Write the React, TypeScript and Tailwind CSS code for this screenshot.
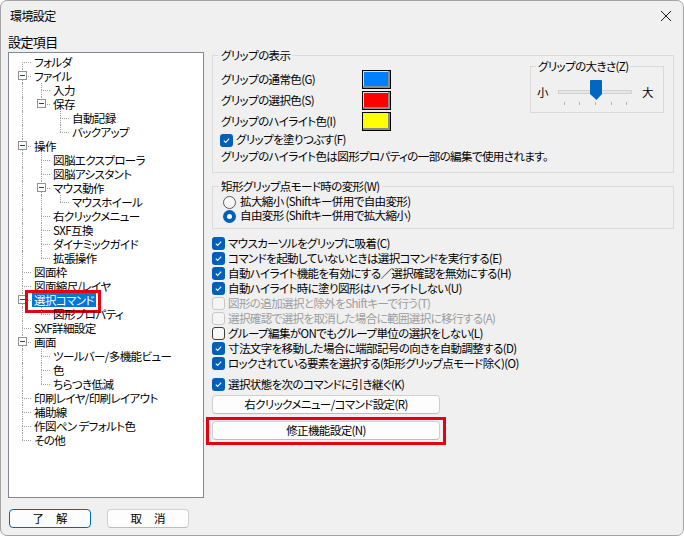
import React from "react";

type Node = [number, string, boolean?];

const TREE: Node[] = [
  [0, "フォルダ"],
  [0, "ファイル", true],
  [1, "入力"],
  [1, "保存", true],
  [2, "自動記録"],
  [2, "バックアップ"],
  [0, "操作", true],
  [1, "図脳エクスプローラ"],
  [1, "図脳アシスタント"],
  [1, "マウス動作", true],
  [2, "マウスホイール"],
  [1, "右クリックメニュー"],
  [1, "SXF互換"],
  [1, "ダイナミックガイド"],
  [1, "拡張操作"],
  [0, "図面枠"],
  [0, "図面縮尺/レイヤ"],
  [0, "選択コマンド", true],
  [1, "図形プロパティ"],
  [0, "SXF詳細設定"],
  [0, "画面", true],
  [1, "ツールバー/多機能ビュー"],
  [1, "色"],
  [1, "ちらつき低減"],
  [0, "印刷レイヤ/印刷レイアウト"],
  [0, "補助線"],
  [0, "作図ペン デフォルト色"],
  [0, "その他"],
];

const SELECTED = 17;

const LINE_X = ["left-[13px]", "left-[32px]", "left-[51px]"];
const BOX_X = ["left-[9px]", "left-[28px]", "left-[47px]"];
const TEXT_PL = ["pl-[23px]", "pl-[42px]", "pl-[61px]"];

const DOT = "border-dotted border-[#a0a0a0]";

function hasNext(idx: number, lvl: number) {
  for (let j = idx + 1; j < TREE.length; j++) {
    if (TREE[j][0] < lvl) return false;
    if (TREE[j][0] === lvl) return true;
  }
  return false;
}

function ancestorContinues(idx: number, lvl: number) {
  for (let j = idx - 1; j >= 0; j--) {
    if (TREE[j][0] === lvl) return hasNext(j, lvl);
  }
  return false;
}

function TreeView() {
  return (
    <div className="w-[196px] h-[446px] bg-white border border-[#828790] pt-[2px]">
      {TREE.map(([level, label, expandable], i) => {
        const next = hasNext(i, level);
        const selected = i === SELECTED;
        return (
          <div key={i} className={`relative h-[14px] flex items-center ${TEXT_PL[level]}`}>
            {/* ancestor lines */}
            {[0, 1].slice(0, level).map((k) =>
              ancestorContinues(i, k) ? (
                <div key={k} className={`absolute top-0 bottom-0 border-l ${DOT} ${LINE_X[k]}`} />
              ) : null
            )}
            {/* own connector */}
            {i > 0 && (
              <div className={`absolute top-0 h-[7px] border-l ${DOT} ${LINE_X[level]}`} />
            )}
            {next && (
              <div className={`absolute top-[7px] bottom-0 border-l ${DOT} ${LINE_X[level]}`} />
            )}
            <div className={`absolute top-[7px] w-[9px] border-t ${DOT} ${LINE_X[level]}`} />
            {expandable && (
              <div
                className={`absolute top-[2px] w-[9px] h-[9px] bg-white border border-[#919191] flex items-center justify-center ${BOX_X[level]}`}
              >
                <div className="w-[5px] h-px bg-[#2a3f6b]" />
              </div>
            )}
            <span
              className={`relative px-[2px] h-[14px] leading-[14px] whitespace-nowrap ${
                selected ? "bg-[#0078d7] text-white" : "text-black"
              }`}
            >
              {label}
            </span>
            {selected && (
              <div className="absolute -top-[3px] left-[16px] w-[76px] h-[23px] border-[3px] border-[#e60012]" />
            )}
          </div>
        );
      })}
    </div>
  );
}

function Check({ checked, disabled }: { checked?: boolean; disabled?: boolean }) {
  if (checked) {
    return (
      <span className="w-[13px] h-[13px] rounded-[3px] bg-[#005fb8] flex items-center justify-center shrink-0">
        <svg width="9" height="9" viewBox="0 0 9 9">
          <path d="M1.8 4.6 L3.7 6.4 L7.2 2.6" fill="none" stroke="#fff" strokeWidth="1.1" />
        </svg>
      </span>
    );
  }
  return (
    <span
      className={`w-[13px] h-[13px] rounded-[3px] border shrink-0 ${
        disabled ? "border-[#c8c8c8] bg-[#f5f5f5]" : "border-[#3c3c3c] bg-[#f7f7f7]"
      }`}
    />
  );
}

function CheckRow({
  label,
  checked,
  disabled,
  className = "",
}: {
  label: string;
  checked?: boolean;
  disabled?: boolean;
  className?: string;
}) {
  return (
    <div className={`h-[15px] flex items-center gap-[3px] ${className}`}>
      <Check checked={checked} disabled={disabled} />
      <span className={`whitespace-nowrap ${disabled ? "text-[#9d9d9d]" : "text-black"}`}>{label}</span>
    </div>
  );
}

function Radio({ checked }: { checked?: boolean }) {
  return checked ? (
    <span className="w-[13px] h-[13px] rounded-full bg-[#005fb8] flex items-center justify-center shrink-0">
      <span className="w-[5px] h-[5px] rounded-full bg-white" />
    </span>
  ) : (
    <span className="w-[13px] h-[13px] rounded-full border border-[#5a5a5a] bg-[#f7f7f7] shrink-0" />
  );
}

function Swatch({ color }: { color: string }) {
  return (
    <div className={`w-[29px] h-[19px] border border-black shadow-[inset_-2px_-2px_0_#8a8a8a,inset_1px_1px_0_#e0e0e0] ${color}`} />
  );
}

function SizeSlider() {
  return (
    <svg width="75" height="28" viewBox="0 0 75 28">
      <rect x="0.5" y="11.5" width="73" height="3" fill="#e6e6e6" stroke="#d2d2d2" />
      {[6, 21, 37, 53, 68].map((x) => (
        <line key={x} x1={x + 0.5} y1="23" x2={x + 0.5} y2="26" stroke="#b0b0b0" />
      ))}
      <path d="M33 1 H43 a1 1 0 0 1 1 1 V15 L38.5 21 L32 15 V2 a1 1 0 0 1 1 -1Z" fill="#0067c0" />
    </svg>
  );
}

const BTN =
  "h-[19px] bg-[#fdfdfd] border border-[#d0d0d0] border-b-[#bcbcbc] rounded-[4px] flex items-center justify-center text-black";

export default function App() {
  return (
    <div className="w-[684px] h-[536px] bg-[#f0f0f0] border border-[#a3a3a3] rounded-[7px] overflow-hidden flex flex-col text-[11.5px] tracking-[-0.6px] text-black font-['Noto_Sans_CJK_JP','Noto_Sans',sans-serif] [font-feature-settings:'palt']">
      {/* title bar */}
      <div className="h-[30px] shrink-0 flex items-center justify-between pl-[9px] pr-[11px]">
        <span className="text-[12px]">環境設定</span>
        <svg width="12" height="12" viewBox="0 0 12 12">
          <path d="M1 1 L11 11 M11 1 L1 11" stroke="#1a1a1a" strokeWidth="1" />
        </svg>
      </div>

      <div className="flex pl-[7px]">
        {/* left column */}
        <div className="w-[196px] flex flex-col">
          <div className="h-[21px] flex items-center text-[13px]">設定項目</div>
          <TreeView />
          <div className="mt-[11px] flex gap-[16px] pl-[1px]">
            <button className="w-[82px] h-[19px] bg-[#fdfdfd] border-[1.5px] border-[#0067c0] rounded-[4px] flex items-center justify-center tracking-[12px] pl-[12px]">
              了解
            </button>
            <button className={`w-[82px] ${BTN} tracking-[12px] pl-[12px]`}>取消</button>
          </div>
        </div>

        {/* right column */}
        <div className="flex-1 pl-[8px] pt-[17px] flex flex-col">
          <fieldset className="w-[462px] border border-[#dadada] pl-[8px] pr-[9px] pb-[6px]">
            <legend className="-ml-[2px] px-[2px] leading-[14px]">グリップの表示</legend>
            <div className="flex items-start justify-between">
              <div className="pt-[7px] flex flex-col">
                {[
                  ["グリップの通常色(G)", "bg-[#0080ff]"],
                  ["グリップの選択色(S)", "bg-[#ff0000]"],
                  ["グリップのハイライト色(I)", "bg-[#ffff00]"],
                ].map(([label, color]) => (
                  <div key={label} className="h-[21px] flex items-center">
                    <span className="w-[141px] whitespace-nowrap">{label}</span>
                    <Swatch color={color} />
                  </div>
                ))}
              </div>
              <fieldset className="-mt-[3px] w-[134px] border border-[#dadada] pl-[6px] pb-[5px]">
                <legend className="-ml-[1px] px-[2px] leading-[14px]">グリップの大きさ(Z)</legend>
                <div className="mt-[6px] flex items-start">
                  <span className="mt-[5px] w-[21px]">小</span>
                  <SizeSlider />
                  <span className="mt-[5px] ml-[9px]">大</span>
                </div>
              </fieldset>
            </div>
            <div className="h-[16px] flex items-center gap-[3px] -ml-[1px]">
              <Check checked />
              <span>グリップを塗りつぶす(F)</span>
            </div>
            <div className="h-[18px] flex items-center whitespace-nowrap">
              グリップのハイライト色は図形プロパティの一部の編集で使用されます。
            </div>
          </fieldset>

          <fieldset className="mt-[6px] w-[462px] border border-[#dadada] pl-[10px] pt-[2px] pb-[5px]">
            <legend className="-ml-[4px] px-[2px] leading-[14px]">矩形グリップ点モード時の変形(W)</legend>
            <div className="h-[14px] flex items-center gap-[4px]">
              <Radio />
              <span>拡大縮小 (Shiftキー併用で自由変形)</span>
            </div>
            <div className="h-[14px] flex items-center gap-[4px]">
              <Radio checked />
              <span>自由変形 (Shiftキー併用で拡大縮小)</span>
            </div>
          </fieldset>

          <div className="mt-[7px] flex flex-col">
            <CheckRow checked label="マウスカーソルをグリップに吸着(C)" />
            <CheckRow checked label="コマンドを起動していないときは選択コマンドを実行する(E)" />
            <CheckRow checked label="自動ハイライト機能を有効にする／選択確認を無効にする(H)" />
            <CheckRow checked label="自動ハイライト時に塗り図形はハイライトしない(U)" />
            <CheckRow disabled label="図形の追加選択と除外をShiftキーで行う(T)" />
            <CheckRow disabled label="選択確認で選択を取消した場合に範囲選択に移行する(A)" />
            <CheckRow label="グループ編集がONでもグループ単位の選択をしない(L)" />
            <CheckRow checked label="寸法文字を移動した場合に端部記号の向きを自動調整する(D)" />
            <CheckRow checked label="ロックされている要素を選択する(矩形グリップ点モード除く)(O)" />
            <CheckRow checked label="選択状態を次のコマンドに引き継ぐ(K)" className="mt-[6px]" />
          </div>

          <button className={`mt-[3px] w-[228px] ${BTN}`}>右クリックメニュー/コマンド設定(R)</button>
          <div className="mt-[3px] -ml-[6px] w-[240px] border-[3px] border-[#e60012] pl-[3px] pt-px pb-[2px]">
            <button className={`w-[228px] ${BTN}`}>修正機能設定(N)</button>
          </div>
        </div>
      </div>
    </div>
  );
}
